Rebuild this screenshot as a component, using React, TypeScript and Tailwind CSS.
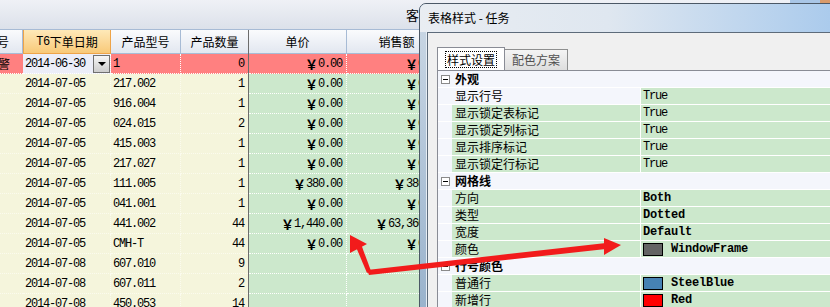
import React from 'react';

type Row = {
  no?: string;
  date: string;
  model: string;
  qty: string;
  price?: string;
  amount?: string;
  alert?: boolean;
};

const rows: Row[] = [
  { no: '报警', date: '2014-06-30', model: '1', qty: '0', price: '0.00', amount: '0.00', alert: true },
  { date: '2014-07-05', model: '217.002', qty: '1', price: '0.00', amount: '0.00' },
  { date: '2014-07-05', model: '916.004', qty: '1', price: '0.00', amount: '0.00' },
  { date: '2014-07-05', model: '024.015', qty: '2', price: '0.00', amount: '0.00' },
  { date: '2014-07-05', model: '415.003', qty: '1', price: '0.00', amount: '0.00' },
  { date: '2014-07-05', model: '217.027', qty: '1', price: '0.00', amount: '0.00' },
  { date: '2014-07-05', model: '111.005', qty: '1', price: '380.00', amount: '380.00' },
  { date: '2014-07-05', model: '041.001', qty: '1', price: '0.00', amount: '0.00' },
  { date: '2014-07-05', model: '441.002', qty: '44', price: '1,440.00', amount: '63,360.00' },
  { date: '2014-07-05', model: 'CMH-T', qty: '44', price: '0.00', amount: '0.00' },
  { date: '2014-07-08', model: '607.010', qty: '9' },
  { date: '2014-07-08', model: '607.011', qty: '2' },
  { date: '2014-07-08', model: '450.053', qty: '14' },
];

const mono = "font-['Liberation_Mono',monospace] text-[12px] tracking-[-1.2px]";
const cjk = "font-['Noto_Sans_CJK_SC',sans-serif]";

function Money({ v }: { v?: string }) {
  if (!v) return null;
  return (
    <span className="flex items-center whitespace-nowrap">
      <span className={`${cjk} text-[13px] font-bold`}>￥</span>
      <span className={mono}>{v}</span>
    </span>
  );
}

// 表格行
function GridRow({ r }: { r: Row }) {
  const left = r.alert ? 'bg-[#ff8080] border-white' : 'bg-[#f5f5dc] border-[#fbfbee]';
  const right = r.alert ? 'bg-[#ff8080]' : 'bg-[#cce8cc]';
  return (
    <div className="flex h-[20px]">
      <div className={`flex w-[23px] shrink-0 items-center justify-end overflow-hidden whitespace-nowrap border-b border-dotted pr-[13px] ${left} ${cjk} text-[12px]`}>
        {r.no}
      </div>
      {r.alert ? (
        <div className="flex w-[88px] shrink-0 items-center border-b border-r border-dotted border-white bg-[#eceef8] pl-[2px]">
          <span className={`${mono} flex-1`}>{r.date}</span>
          <div className="flex h-[18px] w-[17px] items-center justify-center border border-[#6f6f6f] bg-linear-to-b from-[#f6f6f6] to-[#cdcdcd]">
            <div className="h-0 w-0 border-x-[4px] border-t-[4px] border-x-transparent border-t-black" />
          </div>
        </div>
      ) : (
        <div className={`flex w-[88px] shrink-0 items-center border-b border-r border-dotted pl-[2px] ${left}`}>
          <span className={mono}>{r.date}</span>
        </div>
      )}
      <div className={`flex w-[70px] shrink-0 items-center border-b border-r border-dotted pl-[2px] ${left}`}>
        <span className={mono}>{r.model}</span>
      </div>
      <div className={`flex w-[67px] shrink-0 items-center justify-end border-b border-dotted pr-[4px] ${left}`}>
        <span className={mono}>{r.qty}</span>
      </div>
      <div className="w-[1px] shrink-0 bg-[#6c6c6c]" />
      <div className={`flex w-[98px] shrink-0 items-center justify-end border-b border-r border-dotted border-white pr-[4px] ${right}`}>
        <Money v={r.price} />
      </div>
      <div className={`flex w-[100px] shrink-0 items-center justify-end border-b border-r border-dotted border-white pr-[4px] ${right}`}>
        <Money v={r.amount} />
      </div>
      <div className={`flex-1 border-b border-dotted border-white ${right}`} />
    </div>
  );
}

const head =
  'flex h-[24px] shrink-0 items-center justify-center border-b border-r border-[#a7bbd5] bg-linear-to-b from-[#fafbfd] to-[#e2e7f0] text-[12px]';

type Prop =
  | { cat: string }
  | { label: string; value: React.ReactNode; plain?: boolean };

const Swatch = ({ color, name }: { color: string; name: string }) => (
  <span className="flex items-center">
    <span className={`h-[13px] w-[20px] border border-black ${color}`} />
    <span className="ml-[8px] font-['Liberation_Mono',monospace] text-[12px] font-bold tracking-[-0.2px]">{name}</span>
  </span>
);

const bold = (t: string) => (
  <span className="font-['Liberation_Mono',monospace] text-[12px] font-bold tracking-[-0.2px]">{t}</span>
);
const plain = (t: string) => <span className={mono}>{t}</span>;

const props: Prop[] = [
  { cat: '外观' },
  { label: '显示行号', value: plain('True'), plain: true },
  { label: '显示锁定表标记', value: plain('True') },
  { label: '显示锁定列标记', value: plain('True') },
  { label: '显示排序标记', value: plain('True') },
  { label: '显示锁定行标记', value: plain('True') },
  { cat: '网格线' },
  { label: '方向', value: bold('Both') },
  { label: '类型', value: bold('Dotted') },
  { label: '宽度', value: bold('Default') },
  { label: '颜色', value: <Swatch color="bg-[#646464]" name="WindowFrame" /> },
  { cat: '行号颜色' },
  { label: '普通行', value: <Swatch color="bg-[#4682b4]" name="SteelBlue" /> },
  { label: '新增行', value: <Swatch color="bg-[#ff0000]" name="Red" /> },
];

function PropRow({ p }: { p: Prop }) {
  if ('cat' in p) {
    return (
      <div className="flex h-[17px] items-center border-b border-white bg-[#f4f6fc]">
        <div className="ml-[3px] flex h-[9px] w-[9px] items-center justify-center border border-[#8a8a8a] bg-white">
          <div className="h-[1px] w-[5px] bg-black" />
        </div>
        <span className={`${cjk} pl-[5px] text-[12px] font-bold leading-none`}>{p.cat}</span>
      </div>
    );
  }
  return (
    <div className="flex h-[17px] border-b border-white">
      <div className="w-[14px] shrink-0 bg-[#f4f6fc]" />
      <div className={`flex w-[189px] shrink-0 items-center border-r border-white pl-[3px] ${p.plain ? 'bg-[#f4f6fc]' : 'bg-[#cce8cc]'}`}>
        <span className={`${cjk} text-[12px] leading-none`}>{p.label}</span>
      </div>
      <div className="flex flex-1 items-center bg-[#cce8cc] pl-[2px]">{p.value}</div>
    </div>
  );
}

export default function App() {
  return (
    <div className="relative h-[307px] w-[830px] overflow-hidden bg-[#f5f5dc] text-black">
      {/* 标题栏 */}
      <div className={`flex h-[30px] border-b border-[#a7bbd5] bg-linear-to-b from-[#eff1f6] to-[#dce1ea] pl-[406px] pt-[5px] ${cjk} text-[13px]`}>
        客
      </div>

      {/* 表头 */}
      <div className="flex">
        <div className={`${head} w-[23px] justify-end overflow-hidden whitespace-nowrap pr-[13px] ${cjk}`}>编号</div>
        <div className="flex h-[24px] w-[88px] shrink-0 items-center justify-center border border-t-0 border-[#eea449] bg-linear-to-b from-[#fee9b8] to-[#f8c978] text-[12px]">
          <span className="font-['Liberation_Mono',monospace] tracking-[-0.5px]">T6</span>
          <span className={cjk}>下单日期</span>
        </div>
        <div className={`${head} w-[70px] ${cjk}`}>产品型号</div>
        <div className={`${head} w-[67px] border-r-0 ${cjk}`}>产品数量</div>
        <div className="w-[1px] shrink-0 bg-[#6c6c6c]" />
        <div className={`${head} w-[98px] ${cjk}`}>单价</div>
        <div className={`${head} w-[100px] ${cjk}`}>销售额</div>
        <div className={`${head} flex-1`} />
      </div>

      {rows.map((r, i) => (
        <GridRow key={i} r={r} />
      ))}

      {/* 背后窗口的按钮 */}
      <div className="absolute left-[790px] top-0 h-[3px] w-[30px] bg-[#a9c6e6]" />
      <div className="absolute left-[820px] top-0 h-[4px] w-[10px] bg-[#d99a6a]" />

      {/* 对话框 */}
      <div className="absolute left-[419px] top-[3px] flex h-[320px] w-[420px] flex-col overflow-hidden rounded-tl-[7px] border border-[#4b5866] bg-[#b9cde2]">
        <div className={`flex h-[28px] shrink-0 items-center bg-linear-to-r from-[#e9edf2] via-[#dfe7f0] via-45% to-[#a9caec] pl-[8px] ${cjk} text-[12px]`}>
          表格样式 - 任务
        </div>
        <div className="flex flex-1">
          <div className="w-[7px] shrink-0 border-r border-[#e6edf4] bg-linear-to-b from-[#c7d5e3] to-[#97b1cb]" />
          <div className="flex flex-1 flex-col border-l border-t border-[#5d6b7a] bg-[#f0f0f0] pl-[9px] pt-[14px]">
            {/* 选项卡 */}
            <div className="flex h-[23px] items-end">
              <div className="flex h-[23px] w-[68px] items-center justify-center border border-b-0 border-[#898c95] bg-white">
                <span className={`border border-dotted border-black px-[1px] ${cjk} text-[12px] leading-[15px]`}>样式设置</span>
              </div>
              <div className={`flex h-[21px] w-[63px] items-center justify-center border border-b-0 border-l-0 border-[#8e8f8f] bg-linear-to-b from-[#f4f4f4] to-[#dedede] ${cjk} text-[12px] text-[#505050]`}>
                配色方案
              </div>
            </div>
            <div className="flex-1 border-l border-t border-[#898c95]">
              {props.map((p, i) => (
                <PropRow key={i} p={p} />
              ))}
            </div>
          </div>
        </div>
      </div>

      {/* 红色箭头 */}
      <svg className="pointer-events-none absolute left-0 top-0" width="830" height="307" viewBox="0 0 830 307">
        <g fill="#f21b1b">
          <polygon points="350,235 350,253 367,244" />
          <polygon points="356,247 361,244 371,271 367,273" />
          <polygon points="367,270 606,243 606,249 369,275" />
          <polygon points="604,238 621,245 604,255" />
        </g>
      </svg>
    </div>
  );
}
